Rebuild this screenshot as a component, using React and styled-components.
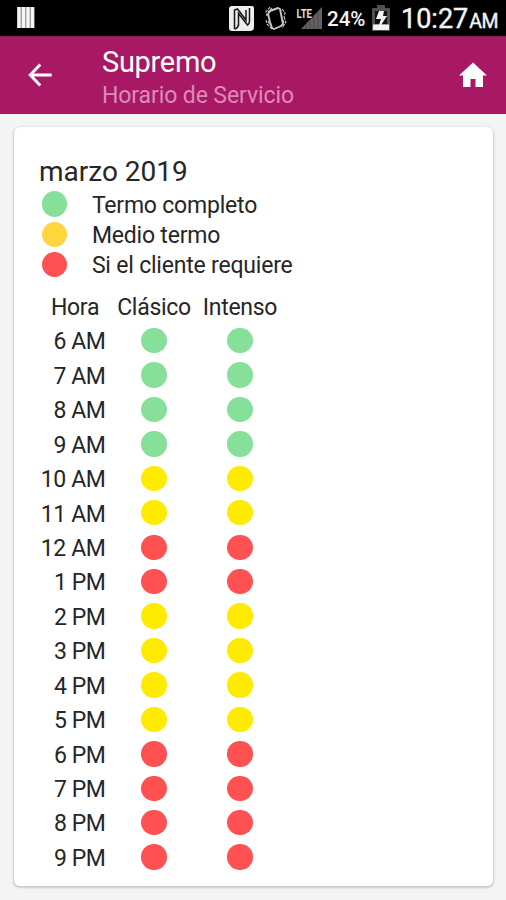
import React from "react";
import styled, { createGlobalStyle } from "styled-components";

const GlobalStyle = createGlobalStyle`
  * { box-sizing: border-box; }
  body { margin: 0; background: #f4f4f4; font-family: Roboto, sans-serif; color: #262626; }
`;

const Screen = styled.div`
  width: 506px;
  height: 900px;
  overflow: hidden;
  background: #f4f4f4;
`;

const StatusBar = styled.div`
  height: 36px;
  background: #000;
  color: #f4f4f4;
  display: flex;
  align-items: center;
  padding: 0 8px 0 17px;
`;

const StatusIcons = styled.div`
  margin-left: auto;
  height: 36px;
  display: flex;
  align-items: center;
`;

const NotificationSlot = styled.span`
  display: flex;
  margin-right: ${({ $space }) => $space}px;
`;

const Battery = styled.span`
  width: 41px;
  margin: 2px 4px 0 4px;
  font-size: 20.5px;
  font-weight: 500;
  white-space: nowrap;
`;

const Clock = styled.span`
  width: 97px;
  margin-left: 11px;
  padding-top: 4px;
  font-size: 27px;
  line-height: 34px;
  -webkit-text-stroke: 0.4px #f4f4f4;
  white-space: nowrap;
`;

const Meridiem = styled.span`
  margin-left: 1px;
  font-size: 19.5px;
  letter-spacing: -0.4px;
`;

const Header = styled.header`
  height: 78px;
  background: #a81864;
  border-top: 1px solid #8b1957;
  border-bottom: 1px solid #9f0f57;
  display: flex;
  align-items: center;
  padding: 0 19px 0 28px;
`;

const Titles = styled.div`
  margin-left: 50px;
  padding-top: 9px;
  flex: 1;
`;

const Title = styled.h1`
  margin: 0;
  font-size: 29px;
  font-weight: 400;
  line-height: 33px;
  letter-spacing: -0.3px;
  color: #fff;
`;

const Subtitle = styled.div`
  font-size: 23px;
  line-height: 34px;
  letter-spacing: -0.1px;
  color: #dc8bb8;
`;

const Card = styled.main`
  width: 479px;
  height: 759px;
  margin: 13px 0 0 14px;
  padding: 27px 0 0 25px;
  background: #fff;
  border-radius: 6px;
  box-shadow: 0 1px 2px 1px rgba(0, 0, 0, 0.17);
`;

const Month = styled.h2`
  margin: 0;
  font-size: 28px;
  font-weight: 400;
  line-height: 35px;
  letter-spacing: 0;
`;

const Legend = styled.ul`
  list-style: none;
  margin: 0;
  padding: 0 0 0 2.5px;
`;

const LegendItem = styled.li`
  height: 30.3px;
  display: flex;
  align-items: center;
  gap: 25px;
`;

const Label = styled.span`
  font-size: 23px;
  line-height: 30px;
  padding-top: 3px;
  letter-spacing: -0.2px;
  white-space: nowrap;
`;

const colors = { full: "#86e09a", half: "#ffd53d", yellow: "#ffeb00", request: "#ff5151" };

const Dot = styled.span`
  display: block;
  width: 25.4px;
  height: 25.4px;
  border-radius: 50%;
  background: ${({ $kind }) => colors[$kind]};
`;

const Schedule = styled.div`
  margin-top: 11px;
`;

const Row = styled.div`
  display: grid;
  grid-template-columns: 72px 86px 86px;
  justify-items: center;
  align-items: center;
  height: ${({ $head }) => ($head ? "32.5px" : "34.45px")};
`;

const HeadCell = styled.span`
  font-size: 23px;
  line-height: 27px;
  letter-spacing: -0.3px;
  padding-top: 1px;
`;

const Hour = styled.span`
  justify-self: end;
  margin-right: 5.5px;
  font-size: 23px;
  line-height: 27px;
  letter-spacing: -0.4px;
  padding-top: 2.5px;
  white-space: nowrap;
`;

const legend = [
  ["full", "Termo completo"],
  ["half", "Medio termo"],
  ["request", "Si el cliente requiere"],
];

const hours = [
  ["6 AM", "full"], ["7 AM", "full"], ["8 AM", "full"], ["9 AM", "full"],
  ["10 AM", "yellow"], ["11 AM", "yellow"], ["12 AM", "request"], ["1 PM", "request"],
  ["2 PM", "yellow"], ["3 PM", "yellow"], ["4 PM", "yellow"], ["5 PM", "yellow"],
  ["6 PM", "request"], ["7 PM", "request"], ["8 PM", "request"], ["9 PM", "request"],
];

const BarsIcon = () => (
  <svg width="18" height="22" viewBox="0 0 18 22">
    <path fill="#9a9a9a" d="M0 0h17.500v21H0z" />
    <path stroke="#f5f5f5" strokeWidth="3.200" d="M2 0v21M6.500 0v21M11 0v21M15.500 0v21" />
  </svg>
);

const NfcIcon = () => (
  <svg width="25" height="25" viewBox="0 0 25 25">
    <path fill="#eee" d="M3 0h20q2 0 2 2v19q0 4-4 4H3q-3 0-3-3V3q0-3 3-3z" />
    <path fill="none" stroke="#161616" strokeWidth="1.500" d="M9.500 20V7.500L18.500 19q2-1 2-4V2M5.500 23V4l3-1L17 14V4M5.500 23q4-1 4-5" />
  </svg>
);

const VibrateIcon = () => (
  <svg width="22" height="25" viewBox="0 0 22 25" fill="none" stroke="#c9c9c9">
    <path strokeWidth="1.900" strokeLinejoin="round" d="M5 5l8-3 2 1 1 5 2 10-2 2-7 3-2-1L5 16 3 8z" />
    <path strokeWidth="1.100" strokeDasharray="3 1" d="M5 1L1 6l1 4M7 2L3 6M1 14l1 4 5 5M3 15l2 4M17 3l3 4-1 4M19 11l2 5-4 6M18 14l1 3" />
  </svg>
);

const SignalText = styled.text`
  font: 700 12.5px Roboto, sans-serif;
`;

const SignalIcon = () => (
  <svg width="27" height="25" viewBox="0 0 27 25">
    <path fill="#626262" d="M26 1v22H5z" />
    <path stroke="#484848" d="M10 18v5M14 14v9M18 10v13M22 5v18" />
    <path fill="#000" d="M0 0h16.500v12.500H0z" />
    <SignalText x="0.500" y="11.500" fill="#dedede" textLength="15.500" lengthAdjust="spacingAndGlyphs">LTE</SignalText>
  </svg>
);

const BatteryIcon = () => (
  <svg width="18" height="26" viewBox="0 0 18 26">
    <path fill="#505050" d="M5 0h8v3h5v23H0V3h5z" />
    <path fill="#111" d="M3 6h12v13H3z" />
    <path fill="#f3f3f3" d="M1 19.500h16V25H1zM7 6h5l-1 5h4L9 20H7l2-6H4z" />
  </svg>
);

const BackIcon = () => (
  <svg width="24" height="24" viewBox="0 0 24 24" fill="none" stroke="#fff" strokeWidth="2.900">
    <path d="M23.700 12H3M12.300 1.500L2.200 12l10.100 10.500" />
  </svg>
);

const HomeIcon = () => (
  <svg width="28" height="26" viewBox="0 0 28 26">
    <path fill="#fff" d="M14 .5L28 13.500h-4V25h-7.500v-8h-5v8H4V13.500H0z" />
  </svg>
);

export default function App() {
  return (
    <Screen>
      <GlobalStyle />
      <StatusBar>
        <BarsIcon />
        <StatusIcons>
          <NotificationSlot $space={11}><NfcIcon /></NotificationSlot>
          <NotificationSlot $space={9}><VibrateIcon /></NotificationSlot>
          <SignalIcon />
          <Battery>24%</Battery>
          <BatteryIcon />
          <Clock>10:27<Meridiem>AM</Meridiem></Clock>
        </StatusIcons>
      </StatusBar>
      <Header>
        <BackIcon />
        <Titles>
          <Title>Supremo</Title>
          <Subtitle>Horario de Servicio</Subtitle>
        </Titles>
        <HomeIcon />
      </Header>
      <Card>
        <Month>marzo 2019</Month>
        <Legend>
          {legend.map(([kind, text]) => (
            <LegendItem key={text}>
              <Dot $kind={kind} />
              <Label>{text}</Label>
            </LegendItem>
          ))}
        </Legend>
        <Schedule>
          <Row $head>
            <HeadCell>Hora</HeadCell>
            <HeadCell>Clásico</HeadCell>
            <HeadCell>Intenso</HeadCell>
          </Row>
          {hours.map(([hour, kind]) => (
            <Row key={hour}>
              <Hour>{hour}</Hour>
              <Dot $kind={kind} />
              <Dot $kind={kind} />
            </Row>
          ))}
        </Schedule>
      </Card>
    </Screen>
  );
}
